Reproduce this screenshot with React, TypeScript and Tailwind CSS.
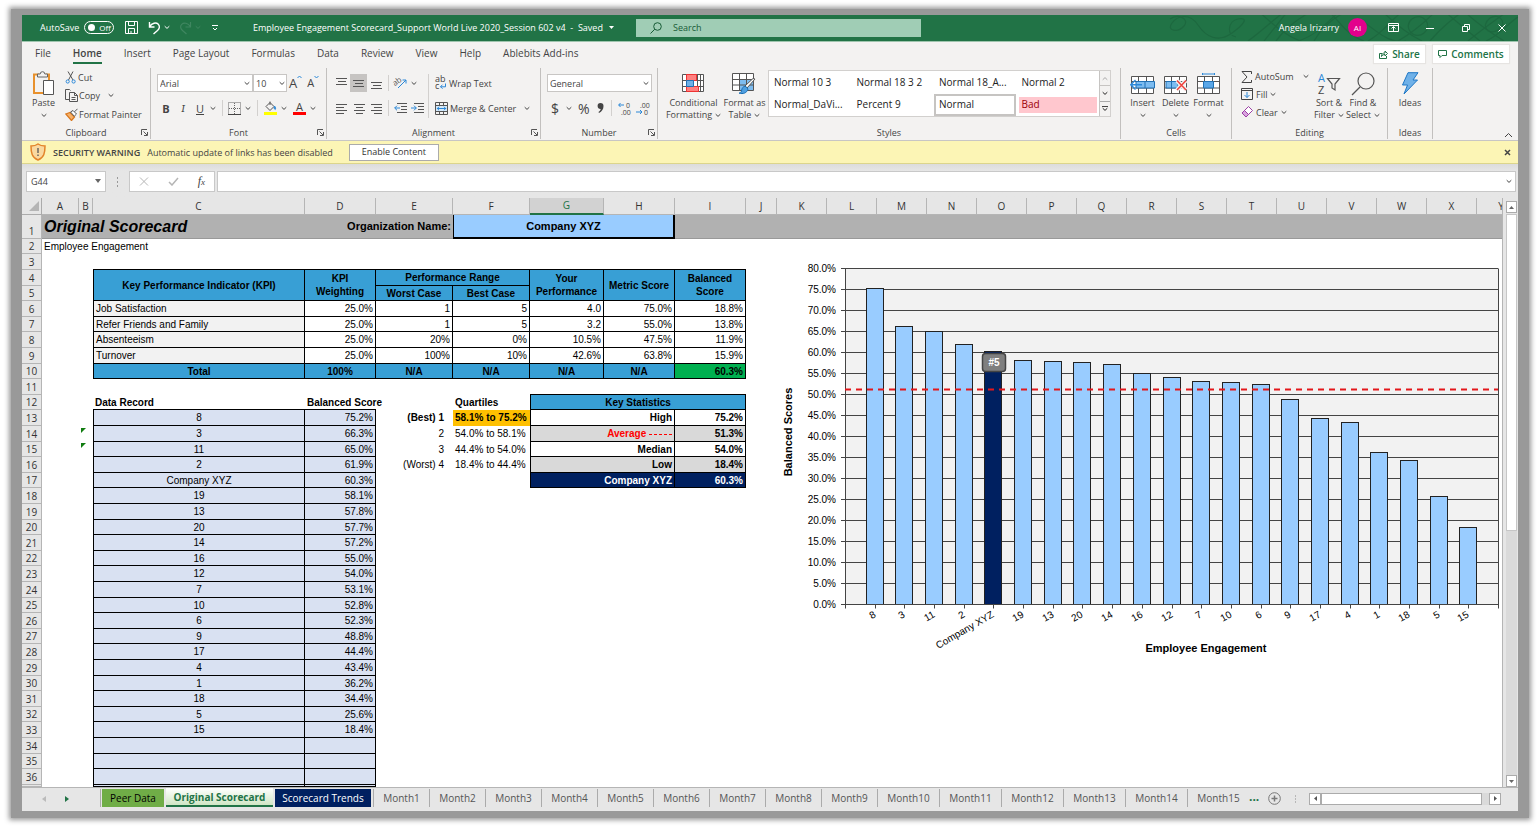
import { useState } from "react";
import type { ReactNode } from "react";

interface Cell {
  text?: ReactNode;
  span?: number;
  rows?: number;
  cls?: string;
}

interface DataRecord {
  name: string;
  score: number;
}

const records: DataRecord[] = [
  { name: "8", score: 75.2 },
  { name: "3", score: 66.3 },
  { name: "11", score: 65.0 },
  { name: "2", score: 61.9 },
  { name: "Company XYZ", score: 60.3 },
  { name: "19", score: 58.1 },
  { name: "13", score: 57.8 },
  { name: "20", score: 57.7 },
  { name: "14", score: 57.2 },
  { name: "16", score: 55.0 },
  { name: "12", score: 54.0 },
  { name: "7", score: 53.1 },
  { name: "10", score: 52.8 },
  { name: "6", score: 52.3 },
  { name: "9", score: 48.8 },
  { name: "17", score: 44.4 },
  { name: "4", score: 43.4 },
  { name: "1", score: 36.2 },
  { name: "18", score: 34.4 },
  { name: "5", score: 25.6 },
  { name: "15", score: 18.4 },
];

const columns = "ABCDEFGHIJKLMNOPQRSTUVWXY".split("");
const menuTabs = ["File", "Home", "Insert", "Page Layout", "Formulas", "Data", "Review", "View", "Help", "Ablebits Add-ins"];
const months = Array.from({ length: 15 }, (_, i) => `Month${i + 1}`);

/* ---------- cell styles ---------- */

const head = "border-r border-b border-black bg-[#389fd5] text-center font-bold";
const box = "border-r border-b border-black";
const num = "border-r border-b border-black text-right";
const rec = "border-r border-b border-black bg-[#d9e1f2]";
const stat = "border-l border-r border-b border-black text-right font-bold";

const kpis = [
  ["Job Satisfaction", "25.0%", "1", "5", "4.0", "75.0%", "18.8%"],
  ["Refer Friends and Family", "25.0%", "1", "5", "3.2", "55.0%", "13.8%"],
  ["Absenteeism", "25.0%", "20%", "0%", "10.5%", "47.5%", "11.9%"],
  ["Turnover", "25.0%", "100%", "10%", "42.6%", "63.8%", "15.9%"],
];

const ErrorMark = () => (
  <svg width="5" height="5" className="mb-[8px] block">
    <path d="M0 0h5L0 5z" fill="#107c10" />
  </svg>
);

// columns E to I beside the data records
const sideCells: Record<number, Cell[]> = {
  13: [
    { text: "(Best) 1", cls: "pb-px pr-[9px] text-right font-bold" },
    { text: "58.1% to 75.2%", cls: "pb-px bg-[#ffc000] font-bold" },
    { text: "High", span: 2, cls: stat },
    { text: "75.2%", cls: num + " font-bold" },
  ],
  14: [
    { text: "2", cls: "pb-px pr-[9px] text-right" },
    { text: "54.0% to 58.1%", cls: "pb-px" },
    {
      text: (
        <span className="text-[#ff0000]">
          Average <span className="inline-block w-[23px] border-t border-dashed border-[#ff0000] align-middle" />
        </span>
      ),
      span: 2,
      cls: stat + " bg-[#d9d9d9]",
    },
    { text: "51.3%", cls: num + " bg-[#d9d9d9] font-bold" },
  ],
  15: [
    { text: "3", cls: "pb-px pr-[9px] text-right" },
    { text: "44.4% to 54.0%", cls: "pb-px" },
    { text: "Median", span: 2, cls: stat },
    { text: "54.0%", cls: num + " font-bold" },
  ],
  16: [
    { text: "(Worst) 4", cls: "pb-px pr-[9px] text-right" },
    { text: "18.4% to 44.4%", cls: "pb-px" },
    { text: "Low", span: 2, cls: stat + " bg-[#d9d9d9]" },
    { text: "18.4%", cls: num + " bg-[#d9d9d9] font-bold" },
  ],
  17: [
    { span: 2 },
    { text: "Company XYZ", span: 2, cls: stat + " bg-[#002060] text-white" },
    { text: "60.3%", cls: num + " bg-[#002060] text-white font-bold" },
  ],
};

function cellsFor(row: number): Cell[] {
  if (row === 1) {
    const grey = "bg-[#b1b1b1] border-b border-[#999999]";
    return [
      { text: "Original Scorecard", span: 3, cls: grey + " text-[16px] italic font-bold" },
      { text: "Organization Name:", span: 2, cls: grey + " text-right font-bold text-[11px]" },
      { text: "Company XYZ", span: 3, cls: "bg-[#99ccff] border-l border-r-2 border-b-2 border-black text-center font-bold text-[11px]" },
      { span: 17, cls: grey },
    ];
  }
  if (row === 2) return [{ text: "Employee Engagement", span: 25, cls: "pb-px" }];
  if (row === 3) return [{ span: 2 }, { span: 7, cls: "border-b border-black" }, { span: 16 }];
  if (row === 4) {
    return [
      { span: 2 },
      { text: "Key Performance Indicator (KPI)", rows: 2, cls: head + " border-l" },
      { text: <>KPI<br />Weighting</>, rows: 2, cls: head },
      { text: "Performance Range", span: 2, cls: head },
      { text: <>Your<br />Performance</>, rows: 2, cls: head },
      { text: "Metric Score", rows: 2, cls: head },
      { text: <>Balanced<br />Score</>, rows: 2, cls: head },
      { span: 16 },
    ];
  }
  if (row === 5) {
    return [{ span: 2 }, { text: "Worst Case", cls: head }, { text: "Best Case", cls: head }, { span: 16 }];
  }
  if (row >= 6 && row <= 9) {
    const [name, ...values] = kpis[row - 6];
    return [
      { span: 2 },
      { text: name, cls: box + " border-l bg-[#f2f2f2]" },
      ...values.map((v) => ({ text: v, cls: num })),
      { span: 16 },
    ];
  }
  if (row === 10) {
    return [
      { span: 2 },
      { text: "Total", cls: head + " border-l" },
      { text: "100%", cls: head },
      ...Array.from({ length: 4 }, () => ({ text: "N/A", cls: head })),
      { text: "60.3%", cls: num + " bg-[#00b050] font-bold" },
      { span: 16 },
    ];
  }
  if (row === 11) return [{ span: 6 }, { span: 3, cls: "border-b border-black" }, { span: 16 }];
  if (row === 12) {
    return [
      { span: 2 },
      { text: "Data Record", cls: "border-b border-black font-bold" },
      { text: "Balanced Score", cls: "border-b border-black font-bold" },
      {},
      { text: "Quartiles", cls: "pb-px font-bold" },
      { text: "Key Statistics", span: 3, cls: head + " border-l" },
      { span: 16 },
    ];
  }
  const record = records[row - 13];
  return [
    {},
    { text: row === 14 || row === 15 ? <ErrorMark /> : null, cls: "px-0" },
    { text: record?.name, cls: rec + " border-l text-center" },
    { text: record ? `${record.score.toFixed(1)}%` : null, cls: rec + " text-right" },
    ...(sideCells[row] ?? [{ span: 5 }]),
    { span: 16 },
  ];
}

// 5 rows take 78px
function rowHeight(row: number) {
  if (row === 1) return "h-[24px]";
  if (row === 37) return "h-[2px]";
  return row % 5 === 0 || row % 5 === 2 ? "h-[15px]" : "h-[16px]";
}

/* ---------- small pieces ---------- */

const Chevron = ({ className = "" }: { className?: string }) => (
  <svg width="6" height="5" viewBox="0 0 6 5" className={"shrink-0 " + className} fill="none" stroke="currentColor">
    <path d="M.7 1.2 3 3.4l2.3-2.2" />
  </svg>
);

const Launcher = () => (
  <button aria-label="More options" className="absolute right-[2px] bottom-[3px]">
    <svg width="7" height="7" viewBox="0 0 7 7" fill="none" stroke="#555">
      <path d="M.5 6V.5H6M2.5 2.5l3.5 3.5M6.5 3v3.5H3" />
    </svg>
  </button>
);

const Sep = ({ className = "" }: { className?: string }) => (
  <span className={"w-px shrink-0 bg-[#d2d0ce] " + className} />
);

function Group({ label, width, launcher, children }: { label: string; width: string; launcher?: boolean; children: ReactNode }) {
  return (
    <section className={"relative flex h-[71px] shrink-0 flex-col border-r border-[#c2c0be] " + width}>
      <div className="flex flex-1">{children}</div>
      <div className="h-[12px] text-center leading-[12px]">{label}</div>
      {launcher && <Launcher />}
    </section>
  );
}

function BigButton({ icon, lines, arrow, width }: { icon: ReactNode; lines: string[]; arrow?: boolean; width: string }) {
  return (
    <button className={"flex shrink-0 flex-col items-center pt-[2px] leading-[12px] whitespace-nowrap " + width}>
      <span className="flex h-[27px] items-center">{icon}</span>
      <span>{lines[0]}</span>
      <span className="flex h-[12px] items-center gap-[3px]">
        {lines[1]}
        {arrow && <Chevron />}
      </span>
    </button>
  );
}

const Lines = ({ d }: { d: string }) => (
  <svg width="13" height="13" viewBox="0 0 13 13" stroke="#555" className="shrink-0">
    <path d={d} />
  </svg>
);

/* ---------- ribbon icons ---------- */

const PasteIcon = () => (
  <svg width="23" height="25" viewBox="0 0 23 25" fill="none">
    <path d="M7 3.5H2V22h9M14 3.5h3V9" stroke="#e8912d" strokeWidth="2" />
    <path d="M5.5 6V3h2.7a2.3 2.3 0 0 1 4.6 0h2.7v3z" fill="#f3f2f1" stroke="#666" />
    <path d="M11.5 9.5h10v14h-10z" fill="#fff" stroke="#555" />
  </svg>
);

const CutIcon = () => (
  <svg width="12" height="13" viewBox="0 0 12 13" fill="none">
    <path d="M3 .5 8 9M8 .5 3.5 9" stroke="#555" />
    <circle cx="2.7" cy="10.5" r="1.6" stroke="#2b88d8" />
    <circle cx="8.6" cy="10.5" r="1.6" stroke="#2b88d8" />
  </svg>
);

const CopyIcon = () => (
  <svg width="13" height="13" viewBox="0 0 13 13" fill="none" stroke="#555">
    <path d="M4.5 10.5h-4V.5h4l1 1M4.5 3.5h5l3 3v6h-8zM9.5 3.5v3h3M6.5 8.5h4M6.5 10.5h4" />
  </svg>
);

const PainterIcon = () => (
  <svg width="13" height="13" viewBox="0 0 13 13" fill="none">
    <path d="M.8 6 5 4.5l4.500 4.500L6.500 12.500z" fill="#f6b26b" stroke="#d9781f" strokeWidth="1.300" />
    <path d="m5.500 4 3.800 4.200L11.500 6 8 2.500zM9.500 3.800 12.500.8" fill="#fff" stroke="#555" />
  </svg>
);

const BordersIcon = () => (
  <svg width="13" height="13" viewBox="0 0 13 13" fill="none" stroke="#666">
    <path d="M.5.5h12v12H.5zM6.5 1v11M1 6.5h11" strokeDasharray="1 1" />
    <path d="M0 12.5h13" stroke="#444" />
  </svg>
);

const FillColorIcon = () => (
  <svg width="13" height="14" viewBox="0 0 13 14" fill="none">
    <path d="M2 5.5 6 1.5l4 4-4 4zM6 4V.5" stroke="#555" />
    <path d="M10.5 5c1 1.5 1.5 2.5.7 3.5-.7-.5-1.2-1-1-2z" fill="#2b88d8" stroke="#2b88d8" />
    <path d="M0 11h13v3H0z" fill="#ffff00" />
  </svg>
);

const OrientationIcon = () => (
  <svg width="14" height="14" viewBox="0 0 14 14" fill="none" className="overflow-visible">
    <text x="0" y="8" fontSize="8" fill="#555" transform="rotate(-35 4 8)">ab</text>
    <path d="m4 12 8-8M8.5 4H12v3.5" stroke="#2b88d8" />
  </svg>
);

const IndentIcon = ({ out }: { out?: boolean }) => (
  <svg width="13" height="13" viewBox="0 0 13 13" fill="none">
    <path d="M3 1.5h10M7 4.5h6M7 7.5h6M3 10.5h10" stroke="#555" />
    <path d={out ? "M6 6H.7M3 3.7.7 6 3 8.3" : "M0 6h5.3M3 3.7 5.3 6 3 8.3"} stroke="#2b88d8" />
  </svg>
);

const WrapIcon = () => (
  <svg width="12" height="14" viewBox="0 0 12 14" fill="none" className="overflow-visible">
    <text x="0" y="6" fontSize="9" fill="#444">ab</text>
    <text x="0" y="13" fontSize="9" fill="#444">c</text>
    <path d="M10.5 7.5v3.3h-5M7.5 8.700l-2 2 2 2" stroke="#2b88d8" />
  </svg>
);

const MergeIcon = () => (
  <svg width="13" height="13" viewBox="0 0 13 13" fill="none">
    <path d="M.5.5h12v12H.5zM.5 3.5h12M.5 9.5h12M4.5.5v3M8.500.5v3M4.500 9.500v3M8.500 9.500v3" stroke="#555" />
    <path d="M1 4h11v5H1z" fill="#d5e9f9" />
    <path d="M2 6.5h9M4 4.800 2.300 6.500 4 8.200M9 4.800l1.700 1.700L9 8.200" stroke="#2b88d8" />
  </svg>
);

const DecimalIcon = ({ more }: { more?: boolean }) => (
  <svg width="13" height="13" viewBox="0 0 13 13" fill="none" className="overflow-visible">
    <text x={more ? 8 : 4} y="6" fontSize="7" fill="#444">{more ? "0" : ".00"}</text>
    <text x={more ? 3 : 8} y="13" fontSize="7" fill="#444">{more ? ".00" : "0"}</text>
    <path d={more ? "M6 3H.7M2.5 1 .7 3l1.8 2" : "M0 10h6M4 8l2 2-2 2"} stroke="#2b88d8" />
  </svg>
);

const ConditionalIcon = () => (
  <svg width="23" height="19" viewBox="0 0 23 19" fill="none">
    <path d="M.5.5h21v17H.5z" fill="#fff" />
    <path d="M.5.5h21v17H.5zM.5 6.500h21M.5 12.500h21M4.500.500v17M15.500.500v17M18.500.500v17" stroke="#555" />
    <path d="M4.500.500h10v6h-10zM4.500 12.500h12v5h-12z" fill="#ff8080" stroke="#e33" />
    <path d="M4.500 6.500h7v6h-7z" fill="#6fb1e8" stroke="#2171b5" />
  </svg>
);

const FormatTableIcon = () => (
  <svg width="25" height="22" viewBox="0 0 25 22" fill="none">
    <path d="M.5.5h21v17H.5z" fill="#fff" />
    <path d="M7.500 6.500h14v11h-14z" fill="#7dbcf0" />
    <path d="M.5.5h21v17H.5zM.5 6.500h21M.5 12h21M7.500.500v17M14.500.500v17" stroke="#555" />
    <path d="m23 6-8 9-2-2 8-7.500z" fill="#fff" stroke="#555" />
    <path d="M14 13.500c-3-.5-4 1.500-4.500 4.500-.5 2-1.500 2-2.500 2 4 1.500 8 0 9-4z" fill="#4e9fe0" stroke="#1a6fb5" />
  </svg>
);

const CellGrid = ({ children }: { children: ReactNode }) => (
  <svg width="25" height="22" viewBox="0 0 25 22" fill="none">
    <path d="M1.500 3.500h22v17h-22zM1.500 8.500h22M1.500 15h22M8.500 3.500v17M16.500 3.500v17" fill="#fff" stroke="#555" />
    {children}
  </svg>
);

const InsertIcon = () => (
  <CellGrid>
    <path d="M6 8.500h18.500V15H6z" fill="#7dbcf0" stroke="#2171b5" />
    <path d="M15 8.500V15" stroke="#2171b5" />
    <path d="M12 11.700H1M5.500 7 .8 11.700l4.700 4.700" stroke="#2b88d8" strokeWidth="1.400" />
  </CellGrid>
);

const DeleteIcon = () => (
  <CellGrid>
    <path d="M3 8.500h12V15H3z" fill="#7dbcf0" stroke="#2171b5" />
    <path d="M8.500 8.500V15" stroke="#2171b5" />
    <path d="m14 7.500 9 9.500M23 7.500 14 17" stroke="#f3f2f1" strokeWidth="4" />
    <path d="m14 7.500 9 9.500M23 7.500 14 17" stroke="#f0423c" strokeWidth="1.500" />
  </CellGrid>
);

const FormatIcon = () => (
  <CellGrid>
    <path d="M7.500 8.500h10V15h-10z" fill="#5aa7e8" stroke="#2171b5" />
    <path d="M6.500 1h12M6.500 0v2M18.500 0v2" stroke="#2b88d8" />
  </CellGrid>
);

const SortIcon = () => (
  <svg width="24" height="23" viewBox="0 0 24 23" fill="none" className="overflow-visible">
    <text x="1" y="10" fontSize="11" fill="#2b88d8">A</text>
    <text x="1" y="22" fontSize="11" fill="#444">Z</text>
    <path d="M10.500 6.500h12l-4.500 5.500v6l-3-2v-4z" stroke="#555" strokeWidth="1.200" />
  </svg>
);

const FindIcon = () => (
  <svg width="24" height="24" viewBox="0 0 24 24" fill="none" stroke="#555" strokeWidth="1.200">
    <circle cx="15" cy="9" r="8" />
    <path d="M9 15 1 23" />
  </svg>
);

const IdeasIcon = () => (
  <svg width="18" height="23" viewBox="0 0 18 23">
    <path d="M7 .7h10L12 8h4.500L3 22l3.500-9h-5z" fill="#6fb1e8" stroke="#1e77c5" />
  </svg>
);

/* ---------- window parts ---------- */

function TitleBar() {
  return (
    <header className="relative flex h-[27px] items-center border-b border-[#9fc5ae] bg-[#217346] pb-[1px] text-white">
      <svg className="absolute top-0 right-0" width="350" height="26" viewBox="0 0 350 26" fill="none" stroke="#1d683f" strokeWidth="1.200">
        <path d="M2 4c8-6 20 0 14 7S-2 16 4 8s18-10 26 2 20 18 34 8S80 2 70 4s-12 16-2 18M80 26c14-10 26-22 40-32M96 26 120-4M90-4c16 14 28 26 48 32M130 26c20-6 30-20 44-32M160-4c12 10 18 24 36 30M200 26c18-10 22-22 36-30M190 4c14 6 28 26 48 22M244 4c10-8 22 6 12 14s-22-6-12-14M262 26c12-14 20-20 36-32M276-4c14 12 24 20 36 30M318 26c14-6 20-16 32-24M322 3c10-6 18 6 8 12s-18-4-8-12" />
        <path d="M108 26c10-14 22-22 36-30M146 26c8-14 20-24 34-30M214-4c12 12 24 22 40 30M230 26c14-8 26-18 38-30M296-4c10 10 24 20 40 30M300 26c12-10 26-20 40-30" />
      </svg>
      <div className="relative flex w-[231px] shrink-0 items-center pl-[18px]">
        <label className="flex items-center gap-[5px]">
          AutoSave
          <input type="checkbox" className="peer sr-only" />
          <span className="flex h-[13px] w-[30px] items-center gap-[4px] rounded-full border border-white pl-[3px] text-[8px]">
            <span className="h-[7px] w-[7px] shrink-0 rounded-full bg-white" />
            Off
          </span>
        </label>
        <button aria-label="Save" className="ml-[11px]">
          <svg width="13" height="13" viewBox="0 0 13 13" fill="none" stroke="#fff">
            <path d="M.5.5h12v12H.5zM3.500.5v4h6v-4M3.500 12.500v-5h6v5M6 10v2" />
          </svg>
        </button>
        <button aria-label="Undo" className="ml-[10px] flex items-center gap-[3px]">
          <svg width="13" height="14" viewBox="0 0 13 14" fill="none" stroke="#fff" strokeWidth="1.400">
            <path d="M1.500 1v5h5M1.700 5.500C4 2 8 1 10.300 3.300c2 2.200 1 4.700-.8 6.200L5.500 13" />
          </svg>
          <Chevron />
        </button>
        <button aria-label="Redo" className="ml-[9px] flex items-center gap-[3px] text-[#3f8660]">
          <svg width="13" height="14" viewBox="0 0 13 14" fill="none" stroke="currentColor" strokeWidth="1.200">
            <path d="M11.500 1v5h-5M11.300 5.500C9 2 5 1 2.700 3.300c-2 2.200-1 4.700.8 6.200L7.500 13" />
          </svg>
          <Chevron />
        </button>
        <button aria-label="Customize toolbar" className="ml-[11px]">
          <svg width="6" height="6" viewBox="0 0 6 6" fill="none" stroke="#fff">
            <path d="M0 .5h6M1 3l2 2 2-2" />
          </svg>
        </button>
      </div>
      <h1 className="relative flex w-[383px] shrink-0 items-center gap-[6px] whitespace-pre">
        Employee Engagement Scorecard_Support World Live 2020_Session 602 v4  -  Saved
        <svg width="5" height="3">
          <path d="M0 0h5L2.500 3z" fill="#fff" />
        </svg>
      </h1>
      <label className="relative flex h-[18px] w-[285px] items-center gap-[11px] bg-[#a0cdb5] pl-[14px] text-[#185c37]">
        <svg width="12" height="12" viewBox="0 0 12 12" fill="none" stroke="currentColor" className="shrink-0">
          <circle cx="7.500" cy="4.500" r="3.800" />
          <path d="M4.800 7.200.5 11.500" />
        </svg>
        <input aria-label="Search" placeholder="Search" className="min-w-0 flex-1 bg-transparent outline-none placeholder:text-[#185c37]" />
      </label>
      <div className="relative ml-auto flex items-center pr-[12px]">
        <span>Angela Irizarry</span>
        <span className="ml-[9px] flex h-[19px] w-[19px] items-center justify-center rounded-full bg-[#e3008c] text-[8px]">AI</span>
        <button aria-label="Ribbon display options" className="ml-[21px]">
          <svg width="11" height="9" viewBox="0 0 11 9" fill="none" stroke="#fff">
            <path d="M.5.5h10v8H.5zM.5 2.500h10M5.500 8V4M3.500 5.500l2-2 2 2" />
          </svg>
        </button>
        <button aria-label="Minimize" className="ml-[27px]">
          <svg width="8" height="8"><path d="M0 4.500h8" stroke="#fff" /></svg>
        </button>
        <button aria-label="Restore" className="ml-[28px]">
          <svg width="8" height="8" viewBox="0 0 8 8" fill="none" stroke="#fff">
            <path d="M.5 2.500h5v5h-5zM2.500 2V.5h5v5H6" />
          </svg>
        </button>
        <button aria-label="Close" className="ml-[28px]">
          <svg width="8" height="8"><path d="m.5.5 7 7m0-7-7 7" stroke="#fff" /></svg>
        </button>
      </div>
    </header>
  );
}

function MenuBar() {
  const [active, setActive] = useState("Home");
  return (
    <nav className="flex h-[24px] items-center bg-[#f3f2f1] pl-[13px] text-[10px] text-[#444]">
      <div className="flex flex-1 gap-[22px]">
        {menuTabs.map((tab) => (
          <button
            key={tab}
            onClick={() => setActive(tab)}
            className={
              tab === active
                ? "h-[19px] border-b-2 border-[#217346] font-semibold whitespace-nowrap"
                : "h-[19px] border-b-2 border-transparent whitespace-nowrap"
            }
          >
            {tab}
          </button>
        ))}
      </div>
      <div className="flex gap-[8px] pr-[9px] font-semibold text-[#217346]">
        <button className="flex h-[18px] w-[51px] items-center justify-center gap-[4px] bg-white shadow-[0_0_1px_1px_#e6e4e2]">
          <svg width="9" height="9" viewBox="0 0 9 9" fill="none" stroke="currentColor">
            <path d="M3 3.500H.5v5h7V6M2.500 6.500c0-2.500 1-3.500 3.500-3.500V1l2.500 2.500L6 6V4.500c-1.500 0-2.500.5-3.500 2z" />
          </svg>
          Share
        </button>
        <button className="flex h-[18px] w-[76px] items-center justify-center gap-[4px] bg-white shadow-[0_0_1px_1px_#e6e4e2]">
          <svg width="9" height="9" viewBox="0 0 9 9" fill="none" stroke="currentColor">
            <path d="M.5.5h8v5H4l-2 2v-2H.5z" />
          </svg>
          Comments
        </button>
      </div>
    </nav>
  );
}

function Ribbon() {
  const combo = "w-full appearance-none border border-[#c8c6c4] bg-white px-[2px] h-[18px] text-[#444] outline-none";
  return (
    <div className="flex h-[75px] border-b border-[#c8c6c4] bg-[#f3f2f1] pt-[2px] text-[#444]">
      <Group label="Clipboard" width="w-[129px]" launcher>
        <BigButton icon={<PasteIcon />} lines={["Paste"]} arrow width="w-[43px]" />
        <div className="flex flex-col whitespace-nowrap">
          <button className="flex h-[18px] items-center gap-[1px]"><CutIcon />Cut</button>
          <button className="flex h-[19px] items-center gap-[1px]"><CopyIcon />Copy<Chevron className="ml-[7px]" /></button>
          <button className="flex h-[19px] items-center gap-[1px]"><PainterIcon />Format Painter</button>
        </div>
      </Group>

      <Group label="Font" width="w-[176px]" launcher>
        <div className="flex flex-col gap-[7px] pt-[6px] pl-[6px]">
          <div className="flex h-[18px] items-center">
            <div className="relative w-[96px]">
              <select aria-label="Font" className={combo}><option>Arial</option></select>
              <Chevron className="absolute top-[7px] right-[3px]" />
            </div>
            <div className="relative w-[34px]">
              <select aria-label="Font size" className={combo}><option>10</option></select>
              <Chevron className="absolute top-[7px] right-[2px]" />
            </div>
            <button aria-label="Increase font size" className="ml-[2px] flex">
              <span className="text-[13px] leading-[16px]">A</span>
              <svg width="5" height="4" fill="none" stroke="#2b88d8"><path d="m.5 3 2-2 2 2" /></svg>
            </button>
            <button aria-label="Decrease font size" className="ml-[5px] flex">
              <span className="text-[11px] leading-[16px]">A</span>
              <svg width="5" height="4" fill="none" stroke="#2b88d8"><path d="m.5 1 2 2 2-2" /></svg>
            </button>
          </div>
          <div className="flex h-[18px] items-center pl-[5px]">
            <button className="w-[8px] text-[11px] font-bold">B</button>
            <button className="ml-[9px] w-[8px] font-serif text-[11px] italic">I</button>
            <button className="ml-[9px] w-[8px] text-[11px] underline">U</button>
            <Chevron className="ml-[6px]" />
            <Sep className="ml-[6px] h-[16px]" />
            <button aria-label="Borders" className="ml-[5px]"><BordersIcon /></button>
            <Chevron className="ml-[4px]" />
            <Sep className="ml-[6px] h-[16px]" />
            <button aria-label="Fill color" className="ml-[6px]"><FillColorIcon /></button>
            <Chevron className="ml-[4px]" />
            <button aria-label="Font color" className="ml-[6px] flex w-[13px] flex-col items-center">
              <span className="text-[11px] leading-[11px]">A</span>
              <span className="h-[3px] w-[13px] bg-[#ff0000]" />
            </button>
            <Chevron className="ml-[4px]" />
          </div>
        </div>
      </Group>

      <Group label="Alignment" width="w-[214px]" launcher>
        <div className="flex flex-col gap-[7px] pt-[6px] pl-[8px]">
          <div className="flex h-[18px] items-center">
            <button aria-label="Top align" className="flex"><Lines d="M1 1.500h11M3 4.500h8M1 7.500h11" /></button>
            <button aria-label="Middle align" className="ml-[2px] flex h-[18px] w-[17px] items-center justify-center bg-[#c6c4c2]">
              <Lines d="M1 3.500h11M3 6.500h8M1 9.500h11" />
            </button>
            <button aria-label="Bottom align" className="ml-[3px] flex"><Lines d="M1 5.500h11M3 8.500h8M1 11.500h11" /></button>
            <Sep className="ml-[5px] h-[16px]" />
            <button aria-label="Orientation" className="ml-[5px] flex items-center gap-[3px]"><OrientationIcon /><Chevron /></button>
          </div>
          <div className="flex h-[18px] items-center">
            <button aria-label="Align left"><Lines d="M1 2.500h11M1 5.500h8M1 8.500h11M1 11.500h8" /></button>
            <button aria-label="Center" className="ml-[5px]"><Lines d="M1 2.500h11M3 5.500h7M1 8.500h11M3 11.500h7" /></button>
            <button aria-label="Align right" className="ml-[4px]"><Lines d="M1 2.500h11M4 5.500h8M1 8.500h11M4 11.500h8" /></button>
            <Sep className="ml-[5px] h-[16px]" />
            <button aria-label="Decrease indent" className="ml-[5px]"><IndentIcon out /></button>
            <button aria-label="Increase indent" className="ml-[4px]"><IndentIcon /></button>
          </div>
        </div>
        <Sep className="mt-[6px] ml-[4px] h-[44px]" />
        <div className="flex flex-col gap-[7px] pt-[6px] pl-[6px] whitespace-nowrap">
          <button className="flex h-[18px] items-center gap-[2px]"><WrapIcon />Wrap Text</button>
          <button className="flex h-[18px] items-center gap-[2px]"><MergeIcon />Merge &amp; Center<Chevron className="ml-[6px]" /></button>
        </div>
      </Group>

      <Group label="Number" width="w-[117px]" launcher>
        <div className="flex flex-col gap-[7px] pt-[6px] pl-[6px]">
          <div className="relative w-[105px]">
            <select aria-label="Number format" className={combo}><option>General</option></select>
            <Chevron className="absolute top-[7px] right-[3px]" />
          </div>
          <div className="flex h-[18px] items-center pl-[4px]">
            <button className="w-[8px] text-[14px]">$</button>
            <Chevron className="ml-[7px]" />
            <button className="ml-[6px] text-[14px]">%</button>
            <button aria-label="Comma style" className="ml-[7px]">
              <svg width="7" height="10" viewBox="0 0 7 10"><path d="M3.500 0A3 3 0 0 1 6.500 3c0 3-1.500 5.500-4.500 7l-.5-1C3 8 3.500 7 3.700 6A3 3 0 1 1 3.500 0z" fill="#444" /></svg>
            </button>
            <Sep className="ml-[7px] h-[16px]" />
            <button aria-label="Increase decimal" className="ml-[6px]"><DecimalIcon more /></button>
            <button aria-label="Decrease decimal" className="ml-[5px]"><DecimalIcon /></button>
          </div>
        </div>
      </Group>

      <Group label="Styles" width="w-[463px]">
        <div className="w-[8px]" />
        <BigButton icon={<ConditionalIcon />} lines={["Conditional", "Formatting"]} arrow width="w-[55px]" />
        <BigButton icon={<FormatTableIcon />} lines={["Format as", "Table"]} arrow width="w-[47px]" />
        <div className="mt-[2px] flex h-[47px] w-[343px] border border-[#d2d0ce] bg-white text-[10px] text-[#222]">
          <div className="grid flex-1 grid-cols-4 grid-rows-2">
            {["Normal 10 3", "Normal 18 3 2", "Normal 18_A...", "Normal 2", "Normal_DaVi...", "Percent 9"].map((s) => (
              <button key={s} className="pl-[5px] text-left whitespace-nowrap">{s}</button>
            ))}
            <button className="mr-[1px] border-2 border-[#c6c4c2] pl-[3px] text-left">Normal</button>
            <button className="my-[3px] mr-[2px] ml-[2px] bg-[#ffc7ce] pl-[3px] text-left text-[#9c0006]">Bad</button>
          </div>
          <div className="flex w-[11px] flex-col border-l border-[#c6c4c2]">
            <button aria-label="Scroll styles up" className="flex flex-1 items-center justify-center border-b border-[#c6c4c2] bg-[#f3f2f1] text-[#aaa]"><Chevron className="rotate-180" /></button>
            <button aria-label="Scroll styles down" className="flex flex-1 items-center justify-center border-b border-[#aaa] bg-[#f3f2f1]"><Chevron /></button>
            <button aria-label="More styles" className="flex flex-1 flex-col items-center justify-center bg-[#f3f2f1]">
              <span className="h-px w-[6px] bg-[#444]" /><Chevron />
            </button>
          </div>
        </div>
      </Group>

      <Group label="Cells" width="w-[111px]">
        <div className="w-[5px]" />
        <BigButton icon={<InsertIcon />} lines={["Insert"]} arrow width="w-[33px]" />
        <BigButton icon={<DeleteIcon />} lines={["Delete"]} arrow width="w-[33px]" />
        <BigButton icon={<FormatIcon />} lines={["Format"]} arrow width="w-[33px]" />
      </Group>

      <Group label="Editing" width="w-[156px]">
        <div className="flex w-[80px] flex-col pl-[9px] whitespace-nowrap">
          <button className="flex h-[17px] items-center gap-[2px]">
            <svg width="12" height="12" viewBox="0 0 12 12" fill="none" stroke="#444"><path d="M10.500 3V.5H1L6 6l-5 5.500h9.500V9" /></svg>
            AutoSum<Chevron className="ml-[7px]" />
          </button>
          <button className="flex h-[18px] items-center gap-[3px]">
            <svg width="12" height="12" viewBox="0 0 12 12" fill="none"><path d="M.5.5h11v11H.5zM.5 2.500h11" stroke="#444" /><path d="M6 4v5.500M3.500 7 6 9.500 8.500 7" stroke="#2b88d8" /></svg>
            Fill<Chevron />
          </button>
          <button className="flex h-[18px] items-center gap-[3px]">
            <svg width="12" height="12" viewBox="0 0 12 12" fill="none" stroke="#9b3fa5"><path d="M7.500.5 11.500 4.500 5 11 1 7z" fill="#fff" /><path d="m1 7 2.500-2.500 4 4L5 11z" fill="#d9a5df" /></svg>
            Clear<Chevron />
          </button>
        </div>
        <BigButton icon={<SortIcon />} lines={["Sort &", "Filter"]} arrow width="w-[34px]" />
        <BigButton icon={<FindIcon />} lines={["Find &", "Select"]} arrow width="w-[34px]" />
      </Group>

      <Group label="Ideas" width="w-[45px]">
        <BigButton icon={<IdeasIcon />} lines={["Ideas"]} width="w-[44px]" />
      </Group>
      <div className="flex flex-1 items-end justify-end pr-[5px] pb-[2px]">
        <button aria-label="Collapse ribbon">
          <svg width="9" height="6" fill="none" stroke="#444"><path d="m1 5 3.500-3.500L8 5" /></svg>
        </button>
      </div>
    </div>
  );
}

function WarningBar() {
  return (
    <div className="flex h-[23px] items-center border-b border-[#dcd58c] bg-[#fcf5b5] pl-[8px] text-[#444]">
      <svg width="16" height="18" viewBox="0 0 16 18">
        <path d="M8 1c2 1.500 4.500 2 7 2 0 7-1 11.500-7 14C2 14.500 1 10 1 3c2.500 0 5-.5 7-2z" fill="#f9d9a0" stroke="#e3842a" strokeWidth="1.500" />
        <path d="M8 5v5M8 11.500V13" stroke="#555" strokeWidth="1.300" />
      </svg>
      <strong className="ml-[7px] font-semibold">SECURITY WARNING</strong>
      <span className="ml-[7px]">Automatic update of links has been disabled</span>
      <button className="ml-[16px] h-[17px] w-[90px] border border-[#ababab] bg-white leading-[14px] text-[#333]">Enable Content</button>
      <button aria-label="Dismiss" className="mr-[7px] ml-auto">
        <svg width="7" height="7"><path d="m1 1 5 5m0-5L1 6" stroke="#444" strokeWidth="1.500" /></svg>
      </button>
    </div>
  );
}

function FormulaBar() {
  return (
    <div className="flex h-[34px] items-start bg-gradient-to-b from-[#dcdcdc] to-[#e6e6e6] to-20% pt-[7px] pr-[2px] pl-[4px] text-[#444]">
      <div className="relative w-[80px]">
        <input aria-label="Name box" defaultValue="G44" className="h-[21px] w-full border border-[#c8c8c8] bg-white pl-[4px] outline-none" />
        <svg width="6" height="4" className="absolute top-[8px] right-[5px]"><path d="M0 0h6L3 4z" fill="#666" /></svg>
      </div>
      <svg width="1" height="10" className="mt-[6px] ml-[11px]"><path d="M0 1h1M0 5h1M0 9h1" stroke="#999" strokeWidth="2" /></svg>
      <div className="ml-[11px] flex h-[21px] w-[86px] items-center justify-between border border-[#c8c8c8] bg-white px-[9px]">
        <button aria-label="Cancel"><svg width="10" height="9"><path d="m1 .5 8 8m0-8-8 8" stroke="#b5b5b5" /></svg></button>
        <button aria-label="Enter"><svg width="11" height="9" fill="none"><path d="m1 5 3 3 6-7" stroke="#b5b5b5" strokeWidth="1.500" /></svg></button>
        <button aria-label="Insert function" className="font-['Liberation_Serif',serif] text-[12px] leading-[16px] italic">f<span className="text-[9px]">x</span></button>
      </div>
      <div className="relative ml-[2px] flex-1">
        <input aria-label="Formula" className="h-[21px] w-full border border-[#c8c8c8] bg-white px-[4px] outline-none" />
        <Chevron className="absolute top-[8px] right-[4px]" />
      </div>
    </div>
  );
}

function Chart() {
  const left = 65;
  const bottom = 343;
  const step = 653 / 22;
  const y = (value: number) => Math.round(bottom - value * 4.2) + 0.5;
  return (
    <svg
      role="img"
      aria-label="Balanced scores by data record"
      width="722"
      height="400"
      viewBox="0 0 722 400"
      fontSize="10"
      className="absolute top-[63px] left-[758px] font-['Liberation_Sans',Arial,sans-serif]"
    >
      <rect x={left + 0.5} y={y(80)} width="653" height={y(0) - y(80)} fill="#f2f2f2" />
      {Array.from({ length: 17 }, (_, i) => i * 5).map((tick) => (
        <g key={tick}>
          <path d={`M${left - 4} ${y(tick)}H${left + 653}`} stroke="#444" />
          <text x={left - 9} y={y(tick) + 3.5} textAnchor="end">{tick.toFixed(1)}%</text>
        </g>
      ))}
      <path d={`M${left + 0.5} ${y(80)}V${y(0) + 4}M${left + 653.5} ${y(80)}V${y(0) + 4}`} stroke="#444" />
      {records.map((r, i) => {
        const x = Math.round(left + step * (i + 1)) + 0.5;
        return (
          <g key={r.name}>
            <rect
              x={x - 9}
              y={y(r.score)}
              width="17"
              height={y(0) - y(r.score)}
              fill={r.name === "Company XYZ" ? "#002060" : "#99ccff"}
              stroke="#222"
            />
            <path d={`M${x} ${y(0)}v4`} stroke="#444" />
            <text x={x + 1} y={y(0) + 12} textAnchor="end" transform={`rotate(-30 ${x + 1} ${y(0) + 12})`}>{r.name}</text>
          </g>
        );
      })}
      <path d={`M${left} ${y(0)}h653`} stroke="#444" />
      <path d={`M${left} ${y(51.3)}h653`} stroke="#e3171b" strokeWidth="2" strokeDasharray="6 5" />
      <rect x="202.5" y="92.5" width="23" height="18" rx="3" fill="#7f7f7f" stroke="#444" strokeWidth="1.5" />
      <text x="214" y="105" textAnchor="middle" fill="#fff" fontWeight="bold" fontSize="10">#5</text>
      <text x="12" y="171" textAnchor="middle" fontWeight="bold" fontSize="11" transform="rotate(-90 12 171)">Balanced Scores</text>
      <text x="426" y="391" textAnchor="middle" fontWeight="bold" fontSize="11">Employee Engagement</text>
    </svg>
  );
}

function Sheet() {
  return (
    <div className="flex bg-[#e6e6e6]">
      <div className="relative min-w-0 flex-1 overflow-hidden border-r border-[#b5b5b5] bg-white">
        <table className="w-[calc(100%+24px)] table-fixed border-separate border-spacing-0 font-['Liberation_Sans',Arial,sans-serif] text-[10px] text-black">
          <colgroup>
            <col className="w-[20px]" />
            <col className="w-[37px]" />
            <col className="w-[14px]" />
            <col className="w-[212px]" />
            <col className="w-[71px]" />
            <col className="w-[77px]" />
            <col className="w-[77px]" />
            <col className="w-[74px]" />
            <col className="w-[71px]" />
            <col className="w-[71px]" />
            <col className="w-[31px]" />
            {Array.from({ length: 14 }, (_, i) => (
              <col key={i} className="w-[50px]" />
            ))}
            <col />
          </colgroup>
          <thead className="font-['Open_Sans',sans-serif] text-[#333]">
            <tr className="h-[17px]">
              <td className="border-r border-b border-[#ababab] bg-[#e6e6e6]">
                <svg width="10" height="10" className="mr-[2px] ml-auto"><path d="M10 0v10H0z" fill="#b5b5b5" /></svg>
              </td>
              {columns.map((c) => (
                <th
                  key={c}
                  scope="col"
                  className={
                    c === "G"
                      ? "border-r border-b-2 border-r-[#b5b5b5] border-b-[#217346] bg-[#d2d2d2] p-0 font-normal text-[#217346]"
                      : "border-r border-b border-[#b5b5b5] bg-[#e6e6e6] p-0 font-normal"
                  }
                >
                  {c}
                </th>
              ))}
            </tr>
          </thead>
          <tbody>
            {Array.from({ length: 37 }, (_, i) => i + 1).map((row) => (
              <tr key={row} className={rowHeight(row)}>
                <th scope="row" className="border-r border-b border-[#b5b5b5] bg-[#e6e6e6] p-0 align-bottom font-['Open_Sans',sans-serif] leading-[13px] font-normal text-[#333]">
                  {row < 37 && row}
                </th>
                {cellsFor(row).map((cell, i) => (
                  <td
                    key={i}
                    colSpan={cell.span}
                    rowSpan={cell.rows}
                    className={"px-[2px] leading-[13px] whitespace-nowrap " + (cell.cls ?? "")}
                  >
                    {cell.text}
                  </td>
                ))}
              </tr>
            ))}
          </tbody>
        </table>
        <Chart />
      </div>
      <div className="flex w-[15px] shrink-0 flex-col items-end pt-[3px] pr-[1px] pl-[3px]">
        <button aria-label="Scroll up" className="flex h-[12px] w-[11px] items-center justify-center border border-[#ababab] bg-white">
          <svg width="5" height="3"><path d="M0 3h5L2.500 0z" fill="#666" /></svg>
        </button>
        <div className="mt-[1px] w-[11px] flex-1 bg-[#dadada]">
          <div className="h-[317px] border border-[#c6c6c6] bg-white" />
        </div>
        <button aria-label="Scroll down" className="flex h-[12px] w-[11px] items-center justify-center border border-[#ababab] bg-white">
          <svg width="5" height="3"><path d="M0 0h5L2.500 3z" fill="#666" /></svg>
        </button>
      </div>
    </div>
  );
}

function SheetTabs() {
  return (
    <footer className="flex h-[24px] border-t border-[#b5b5b5] bg-[#e6e6e6] text-[10px] text-[#555]">
      <button aria-label="Previous sheets" className="ml-[20px] flex h-[21px] items-center"><svg width="4" height="6"><path d="M4 0v6L0 3z" fill="#bbb" /></svg></button>
      <button aria-label="Next sheets" className="ml-[19px] flex h-[21px] items-center"><svg width="4" height="6"><path d="M0 0v6l4-3z" fill="#217346" /></svg></button>
      <div className="flex h-[20px] items-start pl-[31px] whitespace-nowrap">
        <div className="mt-[1px] border-l border-[#ababab] pl-[1px]">
          <button className="block h-[18px] w-[62px] bg-[#70ad47] text-black">Peer Data</button>
        </div>
        <button className="ml-[2px] h-[19px] w-[107px] border-b-2 border-[#217346] bg-gradient-to-b from-white to-[#d0e6c5] pt-[2px] font-bold text-[#217346]">Original Scorecard</button>
        <button className="mt-[1px] ml-[2px] h-[18px] w-[96px] bg-[#002060] text-white">Scorecard Trends</button>
        <div className="mt-[1px] ml-[2px] flex">
          {months.map((m, i) => (
            <button
              key={m}
              className={
                i < 9
                  ? "h-[18px] w-[56px] border-l border-[#ababab]"
                  : i === 9
                    ? "h-[18px] w-[62px] border-l border-[#ababab]"
                    : "h-[18px] w-[62px] border-l border-[#ababab]"
              }
            >
              {m}
            </button>
          ))}
        </div>
        <button aria-label="More sheets" className="text-[12px] leading-[17px] font-bold text-[#217346]">...</button>
      </div>
      <button aria-label="New sheet" className="ml-[9px] flex h-[21px] items-center">
        <svg width="13" height="13" viewBox="0 0 13 13" fill="none" stroke="#777"><circle cx="6.500" cy="6.500" r="5.800" /><path d="M6.500 3.500v6M3.500 6.500h6" strokeWidth="1.500" /></svg>
      </button>
      <div className="ml-auto flex h-[21px] items-center pr-[17px]">
        <svg width="1" height="8" className="mr-[13px]"><path d="M0 1h1M0 4h1M0 7h1" stroke="#888" /></svg>
        <button aria-label="Scroll left" className="flex h-[12px] w-[12px] items-center justify-center border border-[#ababab] bg-white"><svg width="3" height="5"><path d="M3 0v5L0 2.500z" fill="#555" /></svg></button>
        <div className="flex h-[12px] w-[168px] bg-[#dadada]">
          <div className="w-[161px] border border-[#ababab] bg-white" />
        </div>
        <button aria-label="Scroll right" className="flex h-[12px] w-[12px] items-center justify-center border border-[#ababab] bg-white"><svg width="3" height="5"><path d="M0 0v5l3-2.500z" fill="#555" /></svg></button>
      </div>
    </footer>
  );
}

export default function App() {
  return (
    <div className="bg-white px-[11px] pt-[9px] pb-[8px]">
      <div className="bg-[#999999] px-[11px] pt-[6px] pb-[7px] shadow-[0_0_5px_2px_#999999]">
        <main className="overflow-hidden bg-[#e6e6e6] font-['Open_Sans',sans-serif] text-[9px] leading-[15px]">
          <TitleBar />
          <MenuBar />
          <Ribbon />
          <WarningBar />
          <FormulaBar />
          <Sheet />
          <SheetTabs />
        </main>
      </div>
    </div>
  );
}
